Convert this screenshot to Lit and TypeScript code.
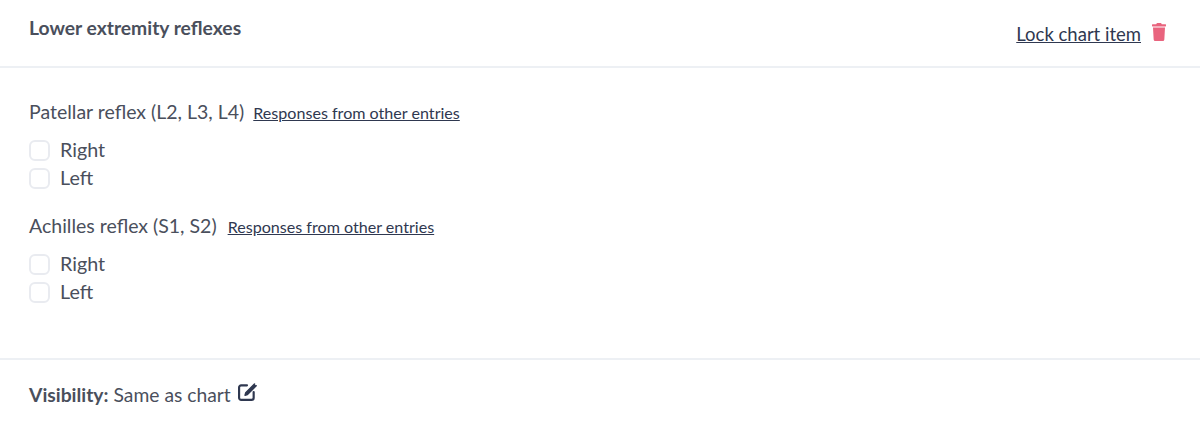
import { LitElement, html, css } from "lit";
import { customElement } from "lit/decorators.js";

const groups = [
  { label: "Patellar reflex (L2, L3, L4)", wide: false },
  { label: "Achilles reflex (S1, S2)", wide: true },
];

@customElement("app-root")
export class AppRoot extends LitElement {
  static styles = css`
    :host {
      display: block;
      width: 1200px;
      height: 427px;
      background: #fff;
      font-family: "Lato", "Noto Sans", sans-serif;
      color: #4a4f5c;
      overflow: hidden;
    }
    .head {
      box-sizing: border-box;
      display: flex;
      justify-content: space-between;
      align-items: flex-start;
      padding: 16px 34px 0 29px;
      border-bottom: 2px solid #edf0f4;
      height: 68px;
    }
    .title {
      font-weight: 700;
      font-size: 19.3px;
      line-height: 24px;
    }
    .actions {
      display: flex;
      align-items: flex-start;
      gap: 11px;
      padding-top: 6px;
    }
    .lock {
      font-size: 18.5px;
      line-height: 25px;
      color: #2f3850;
      text-decoration: underline;
    }
    .trash {
      width: 14px;
      height: 18px;
      margin-top: 1px;
      display: block;
    }
    .body {
      box-sizing: border-box;
      padding: 32px 29px 0;
      border-bottom: 2px solid #edf0f4;
      height: 292px;
    }
    .group {
      margin-bottom: 23px;
    }
    .q {
      display: flex;
      align-items: baseline;
      gap: 9px;
      height: 24px;
      line-height: 24px;
      font-size: 19.5px;
      margin-bottom: 12px;
    }
    .q.wide {
      gap: 11px;
    }
    .resp {
      font-size: 16.1px;
      color: #2f3850;
      text-decoration: underline;
    }
    .opt {
      display: flex;
      align-items: center;
      gap: 10px;
      height: 27.5px;
      font-size: 19.7px;
    }
    .box {
      border: 2px solid #e9ebf0;
      border-radius: 6px;
      box-sizing: border-box;
      width: 21px;
      height: 21px;
      margin-top: 2px;
      background: #fff;
    }
    .foot {
      display: flex;
      align-items: center;
      padding: 23px 29px 0;
      font-size: 19.3px;
      line-height: 24px;
    }
    .foot b { font-weight: 700; margin-right: 5px; }
    .edit { width: 20px; height: 20px; margin-left: 6px; margin-top: -7px; display: block; }
  `;

  render() {
    return html`
      <div class="head">
        <div class="title">Lower extremity reflexes</div>
        <div class="actions">
          <span class="lock">Lock chart item</span>
          <svg class="trash" viewBox="0 0 448 512" preserveAspectRatio="none" fill="#e9647e">
            <path d="M432 32H312l-9.400-18.700A24 24 0 0 0 281.100 0H166.800a23.700 23.700 0 0 0-21.400 13.300L136 32H16A16 16 0 0 0 0 48v32a16 16 0 0 0 16 16h416a16 16 0 0 0 16-16V48a16 16 0 0 0-16-16zM53.200 467a48 48 0 0 0 47.900 45h245.800a48 48 0 0 0 47.900-45L416 128H32z"/>
          </svg>
        </div>
      </div>
      <div class="body">
        ${groups.map(
          (g) => html`
            <div class="group">
              <div class="q ${g.wide ? "wide" : ""}"><span>${g.label}</span><span class="resp">Responses from other entries</span></div>
              <div class="opt"><span class="box"></span><span>Right</span></div>
              <div class="opt"><span class="box"></span><span>Left</span></div>
            </div>
          `
        )}
      </div>
      <div class="foot">
        <b>Visibility:</b><span>Same as chart</span>
        <svg class="edit" viewBox="0 0 24 24" fill="none" stroke="#2f3850" stroke-width="2.600" stroke-linecap="round" stroke-linejoin="round">
          <path d="M12 4H5a2.500 2.500 0 0 0-2.500 2.500V19A2.500 2.500 0 0 0 5 21.500h12.500A2.500 2.500 0 0 0 20 19v-7"/>
          <path d="M21 2.500 10.500 13l-.8 2.800 2.800-.8L23 4.500" fill="#2f3850" stroke-width="1.800"/>
        </svg>
      </div>
    `;
  }
}
